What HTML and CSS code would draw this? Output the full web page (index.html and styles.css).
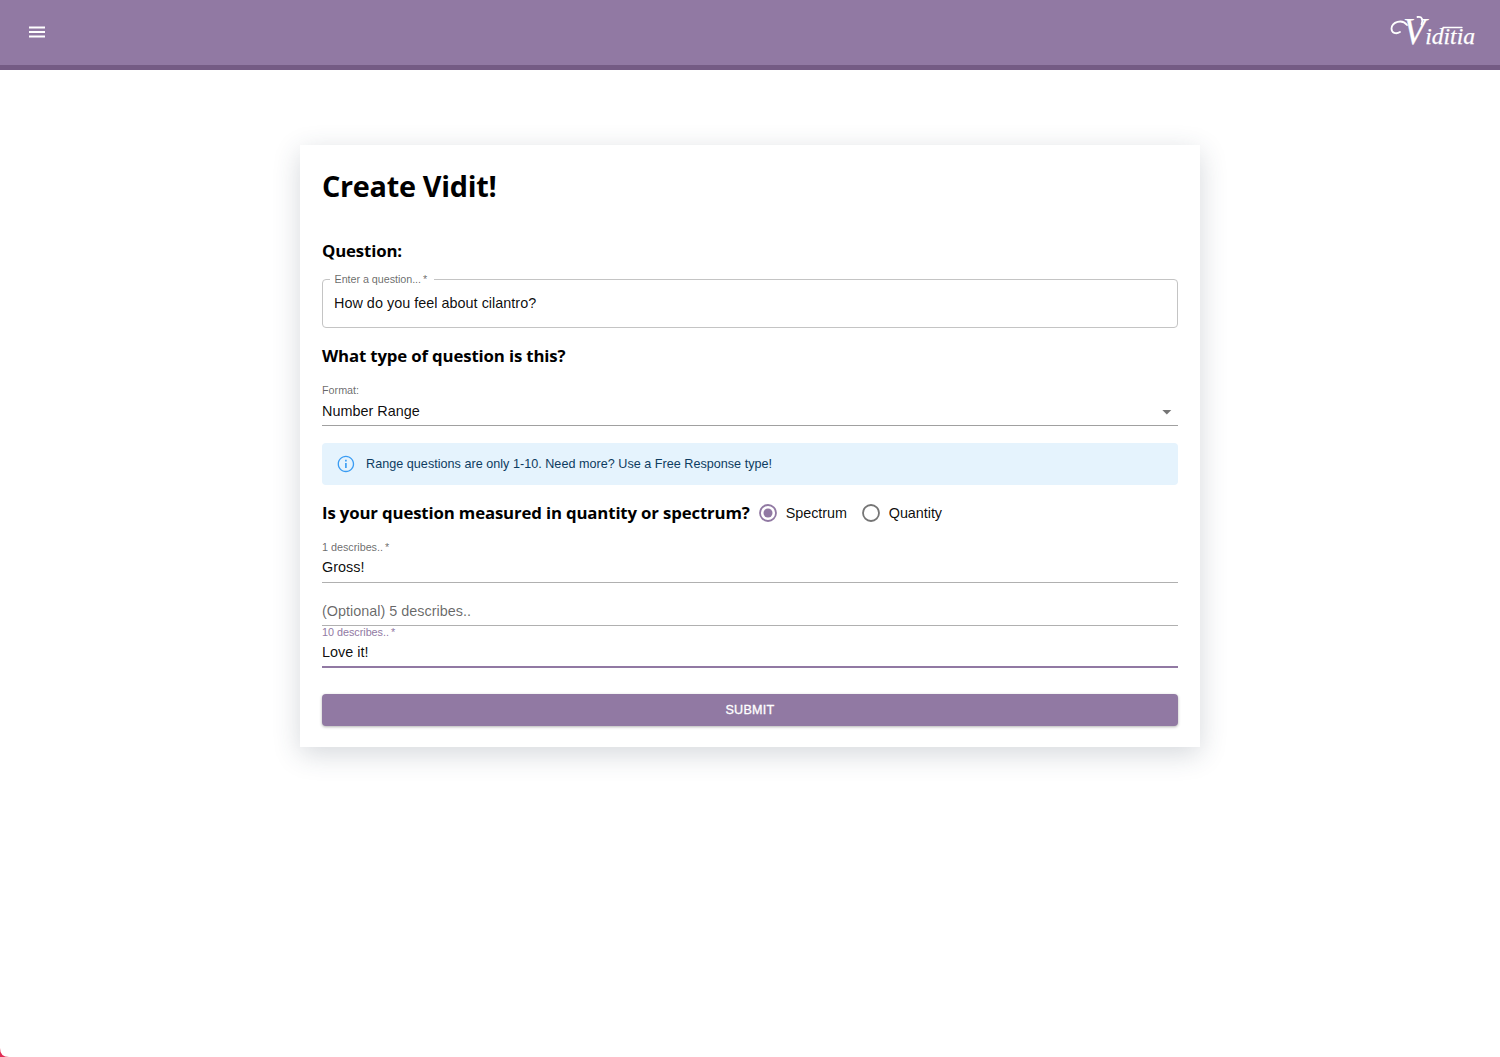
FILE: index.html
```html
<!DOCTYPE html>
<html lang="en">
<head>
<meta charset="utf-8">
<title>Viditia</title>
<link rel="stylesheet" href="styles.css">
</head>
<body>
<header class="topbar">
  <button class="menu-button" type="button" aria-label="Menu">
    <svg class="menu-icon" viewBox="0 0 22 22"><path d="M3 5.500h16v2H3zm0 4.500h16v2H3zm0 4.500h16v2H3z"/></svg>
  </button>
  <svg class="logo" viewBox="0 0 90 40" role="img" aria-label="Viditia">
    <path class="flourish" d="M12 21C8 23.500 3.500 22 3.500 17.500C4 11 14 7.500 19 14"/>
    <path class="flourish" d="M29.500 6C34 5 35.500 9 33.500 13.500"/>
    <text class="logo-text" x="15" y="33" textLength="72" lengthAdjust="spacingAndGlyphs"><tspan class="logo-initial">V</tspan>iditia</text>
    <path class="flourish bar" d="M55 16.500H74"/>
  </svg>
</header>
<main class="card">
  <h1 class="title">Create Vidit!</h1>
  <h2 class="heading">Question:</h2>
  <fieldset class="outlined">
    <legend class="legend">Enter a question...&#8201;*</legend>
    <div class="outlined-value">How do you feel about cilantro?</div>
  </fieldset>
  <h2 class="heading type-heading">What type of question is this?</h2>
  <div class="field format">
    <div class="label">Format:</div>
    <div class="value select-value"><span>Number Range</span>
      <svg class="arrow" viewBox="0 0 24 24"><path d="M7 10l5 5 5-5z"/></svg>
    </div>
  </div>
  <div class="alert">
    <svg class="info" viewBox="0 0 24 24"><path d="M11 7h2v2h-2zm0 4h2v6h-2zm1-9C6.480 2 2 6.480 2 12s4.480 10 10 10 10-4.480 10-10S17.520 2 12 2zm0 18.400c-4.640 0-8.400-3.760-8.400-8.400s3.760-8.400 8.400-8.400 8.400 3.760 8.400 8.400-3.760 8.400-8.400 8.400z"/></svg>
    <span>Range questions are only 1-10. Need more? Use a Free Response type!</span>
  </div>
  <div class="measure">
    <h2 class="heading measure-heading">Is your question measured in quantity or spectrum?</h2>
    <div class="radio selected">
      <svg class="radio-icon" viewBox="0 0 22 22"><circle class="ring" cx="11" cy="11" r="8"/><circle class="dot" cx="11" cy="11" r="4.500"/></svg>
      <span>Spectrum</span>
    </div>
    <div class="radio">
      <svg class="radio-icon" viewBox="0 0 22 22"><circle class="ring" cx="11" cy="11" r="8"/></svg>
      <span>Quantity</span>
    </div>
  </div>
  <div class="field low">
    <div class="label">1 describes..&#8201;*</div>
    <div class="value">Gross!</div>
  </div>
  <div class="field middle">
    <div class="value placeholder">(Optional) 5 describes..</div>
  </div>
  <div class="field high">
    <div class="label">10 describes..&#8201;*</div>
    <div class="value">Love it!</div>
  </div>
  <button class="submit" type="button">SUBMIT</button>
</main>
<svg class="corner" viewBox="0 0 9 9"><path d="M0 0Q0 9 9 9H0Z"/></svg>
</body>
</html>
```
FILE: styles.css
```css
* { box-sizing: border-box; }
body {
  margin: 0;
  height: 1057px;
  overflow: hidden;
  background: #fff;
  color: rgba(0, 0, 0, .95);
  font-family: "Liberation Sans", Arial, sans-serif;
  font-size: 14.4px;
}
.topbar {
  display: flex;
  align-items: center;
  justify-content: space-between;
  height: 69.500px;
  padding: 0 22px 0 26px;
  background: #9179a3;
  border-bottom: 5px solid #745b84;
}
.menu-button {
  display: flex;
  padding: 0;
  border: 0;
  background: none;
}
.menu-icon { width: 22px; height: 22px; fill: #fff; }
.logo { width: 90px; height: 40px; margin-top: -2px; }
.logo-text {
  fill: #fff;
  stroke: #fff;
  stroke-width: .25px;
  font-family: "Liberation Serif", serif;
  font-style: italic;
  font-size: 24px;
}
.logo-initial { font-size: 37px; }
.flourish { fill: none; stroke: #fff; stroke-width: 1.8; stroke-linecap: round; }
.bar { stroke-width: 1.3; }
.card {
  width: 900px;
  height: 602px;
  margin: 75.500px auto 0;
  padding: 0 22px;
  background: #fff;
  box-shadow: 0 7px 26px rgba(44, 62, 80, .2);
}
.title, .heading {
  margin: 0;
  color: #000;
  font-family: "Open Sans", "Noto Sans", sans-serif;
  font-weight: 700;
}
.title { font-size: 28.800px; letter-spacing: -.28px; line-height: 81px; height: 84px; }
.heading { font-size: 16.800px; letter-spacing: -.145px; line-height: 43px; height: 45px; }
.outlined {
  height: 54px;
  min-width: 0;
  margin: 0;
  padding: 0 11px;
  border: 1px solid #c4c4c4;
  border-radius: 4px;
}
.legend {
  height: 11px;
  margin-left: -4px;
  padding: 0 7px 0 4.500px;
  line-height: 10px;
}
.legend, .label {
  color: rgba(0, 0, 0, .6);
  font-size: 10.800px;
  letter-spacing: -.02px;
}
.legend { letter-spacing: -.06px; }
.outlined-value { line-height: 26px; letter-spacing: .02px; margin-top: 5px; }
.type-heading { height: 57px; line-height: 55px; }
.field { border-bottom: 1px solid #a0a0a0; }
.label { height: 12px; line-height: 12px; }
.value { height: 28px; line-height: 28px; letter-spacing: .01px; }
.format { height: 41px; }
.format .label { line-height: 10px; }
.select-value { display: flex; justify-content: space-between; align-items: center; }
.arrow { width: 21.600px; height: 21.600px; margin-top: 2px; fill: rgba(0, 0, 0, .54); }
.alert {
  display: flex;
  align-items: center;
  gap: 10.300px;
  height: 42px;
  margin-top: 17px;
  padding: 0 14px;
  border-radius: 4px;
  background: #e5f3fd;
  color: #0d3c61;
  font-size: 12.600px;
  letter-spacing: .02px;
}
.info { width: 19.800px; height: 19.800px; fill: #3a9cf3; }
.measure { display: flex; align-items: center; height: 56px; }
.measure-heading { margin-right: 7px; }
.radio { display: flex; align-items: center; gap: 7px; margin-right: 12.800px; letter-spacing: -.04px; }
.radio-icon { width: 22px; height: 22px; }
.ring { fill: none; stroke: #757575; stroke-width: 1.800; }
.selected .ring { stroke: #9179a3; }
.dot { fill: #9179a3; }
.low { height: 42px; }
.low .value { line-height: 29px; }
.middle { height: 43px; padding-top: 14px; }
.low, .middle { border-bottom-color: #b0b0b0; }
.placeholder { color: rgba(0, 0, 0, .6); }
.high { height: 42px; border-bottom: 2px solid #9179a3; }
.high .label { color: #9179a3; }
.submit {
  display: block;
  width: 100%;
  height: 32px;
  margin-top: 26px;
  padding: 0 0 1px;
  border: 0;
  border-radius: 4px;
  background: #9179a3;
  box-shadow: 0 1px 3px rgba(0, 0, 0, .3);
  color: #fff;
  font: 500 12.600px "Liberation Sans", Arial, sans-serif;
  letter-spacing: .25px;
  -webkit-text-stroke: .3px #fff;
}
.corner { position: absolute; left: 0; bottom: 0; width: 9px; height: 9px; fill: #e02d55; }
```
